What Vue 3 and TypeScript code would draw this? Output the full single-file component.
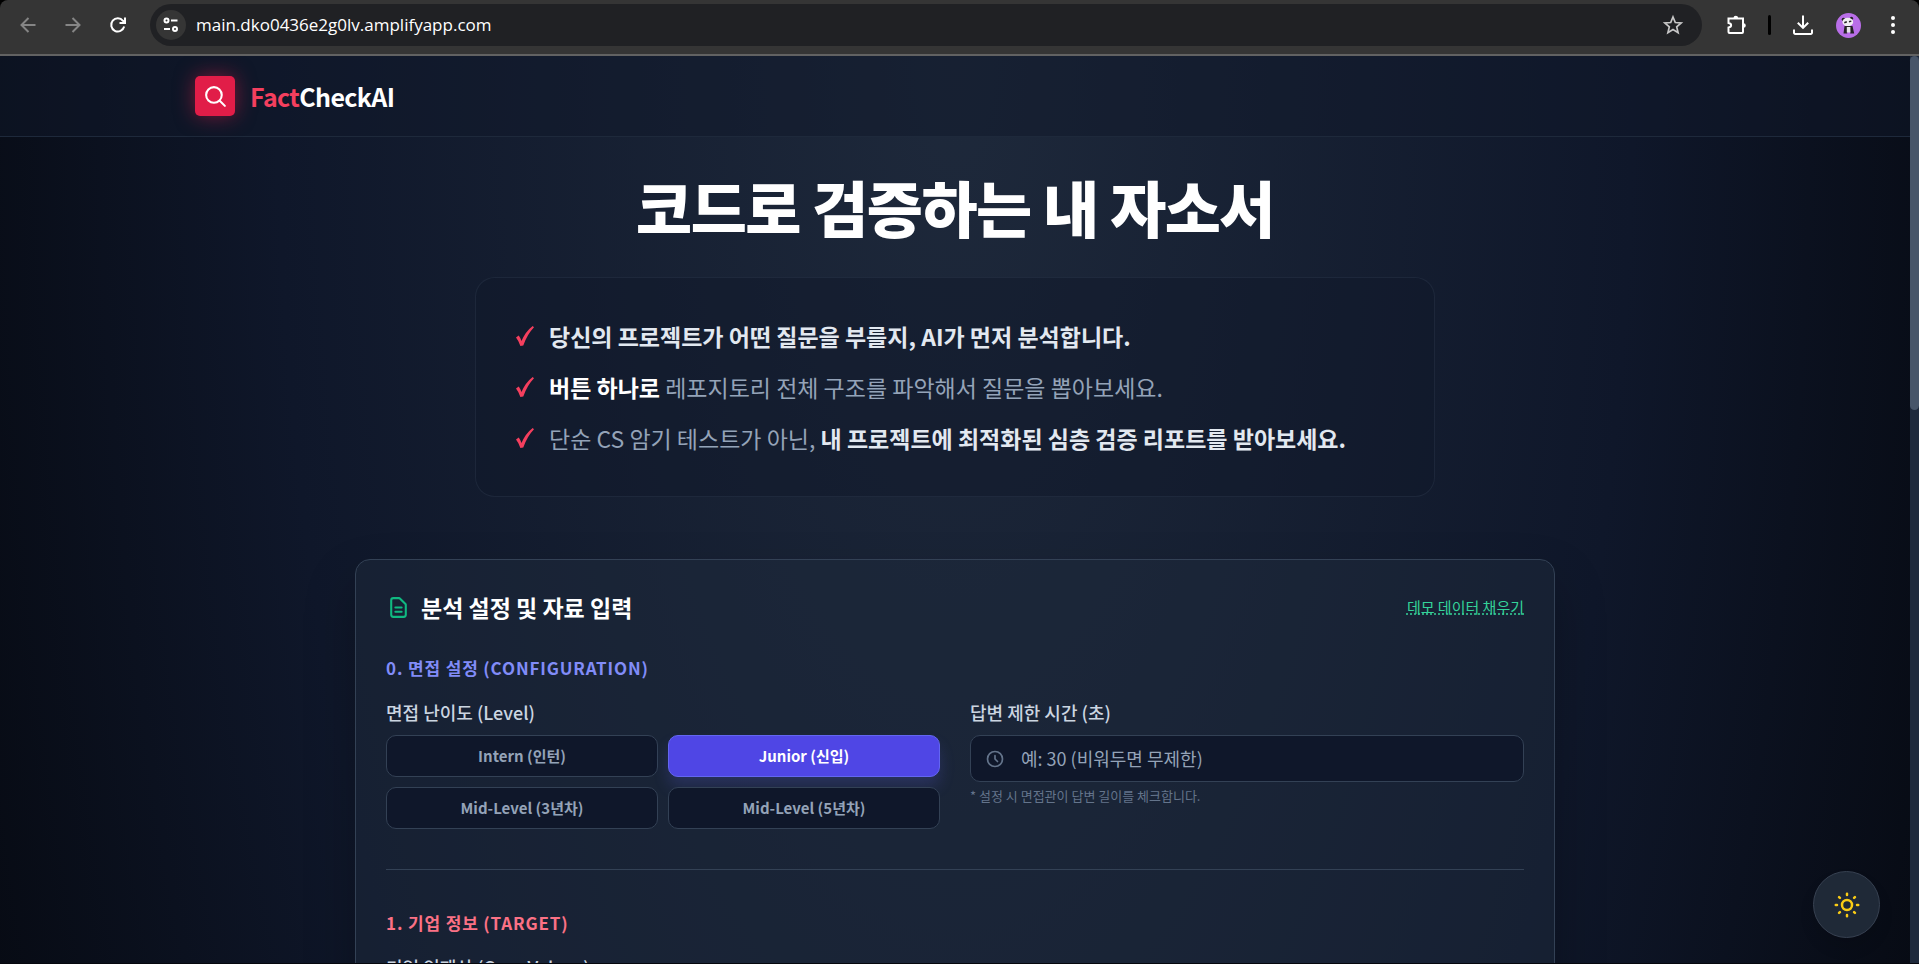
<script setup lang="ts">
import { ref } from 'vue'

interface Level {
  value: string
  label: string
}

const levels: Level[] = [
  { value: 'intern', label: 'Intern (인턴)' },
  { value: 'junior', label: 'Junior (신입)' },
  { value: 'mid3', label: 'Mid-Level (3년차)' },
  { value: 'mid5', label: 'Mid-Level (5년차)' },
]

const selected = ref<string>('junior')
const timeLimit = ref<string>('')
const coreValues = ref<string>('')
const address = ref<string>('main.dko0436e2g0lv.amplifyapp.com')
</script>

<template>
  <div class="window">
    <div class="toolbar">
      <button class="tool" type="button" aria-label="Back">
        <svg class="dim" width="20" height="20" viewBox="0 0 20 20"><path d="M17.500 10H3.500M10.500 3 3.500 10l7 7" /></svg>
      </button>
      <button class="tool" type="button" aria-label="Forward">
        <svg class="dim" width="20" height="20" viewBox="0 0 20 20"><path d="M2.500 10h14M9.500 3l7 7-7 7" /></svg>
      </button>
      <button class="tool" type="button" aria-label="Reload">
        <svg class="bold" width="20" height="20" viewBox="0 0 20 20"><path d="M16.200 11.600A6.600 6.600 0 1 1 15 5.800L16.500 7.300M17 2.500V8h-5.500" /></svg>
      </button>
      <div class="omnibox">
        <button class="site" type="button" aria-label="Site information">
          <svg width="18" height="18" viewBox="0 0 18 18"><circle cx="4.500" cy="4.500" r="2" /><path d="M9 4.500h6.500M2 13h6" /><circle cx="13" cy="13" r="2" /></svg>
        </button>
        <input v-model="address" class="address" type="text" aria-label="Address" spellcheck="false" />
        <button class="star" type="button" aria-label="Bookmark">
          <svg width="22" height="22" viewBox="0 0 22 22"><path d="M11 3l2.300 5.500 5.900.5-4.500 3.900 1.400 5.800L11 15.600l-5.100 3.100 1.400-5.800L2.800 9l5.900-.5z" /></svg>
        </button>
      </div>
      <div class="actions">
        <button class="action extensions" type="button" aria-label="Extensions">
          <svg class="bold" width="24" height="24" viewBox="0 0 24 24"><path d="M4.500 5.500h14.500v13.500a1 1 0 0 1-1 1H5.500a1 1 0 0 1-1-1v-4.500c3.500-.5 3.500-4 0-4.500z" /><path class="fill" d="M9.500 5a2.300 2.300 0 0 1 4.600 0zM19.500 10.200a2.300 2.300 0 0 1 0 4.600z" /></svg>
        </button>
        <span class="bar"></span>
        <button class="action" type="button" aria-label="Downloads">
          <svg class="bold" width="24" height="24" viewBox="0 0 24 24"><path d="M12 2.500v12M6.800 9.700l5.200 5.200 5.200-5.200M3 16.500v3.300a1.200 1.200 0 0 0 1.200 1.200h15.600a1.200 1.200 0 0 0 1.200-1.200v-3.300" /></svg>
        </button>
        <button class="action" type="button" aria-label="Profile">
          <svg class="avatar" width="25" height="25" viewBox="0 0 25 25">
            <circle cx="12.500" cy="12.500" r="12.500" fill="#b96ee8" />
            <circle cx="7.500" cy="6.500" r="1.800" fill="#242226" /><circle cx="15.500" cy="5.300" r="1.600" fill="#242226" />
            <ellipse cx="11.800" cy="9" rx="5.400" ry="4.200" fill="#f0edf2" />
            <path d="M8.300 9.800l2.500-1M13 8.800l2.300-.7" stroke="#242226" stroke-width="1.500" />
            <path d="M8.500 13h8l1.700 7.500h-4v-3h-3v3H7.500z" fill="#242226" />
            <path d="M10.800 14h3.600v5.500h-3.600z" fill="#e5e2e8" />
          </svg>
        </button>
        <button class="action" type="button" aria-label="Menu">
          <svg width="24" height="24" viewBox="0 0 24 24"><g class="fill"><circle cx="12" cy="5" r="2" /><circle cx="12" cy="12" r="2" /><circle cx="12" cy="19" r="2" /></g></svg>
        </button>
      </div>
    </div>

    <div class="viewport">
      <div class="page">
        <header class="header">
          <div class="brand">
            <span class="mark">
              <svg width="25" height="25" viewBox="0 0 24 24"><path d="M21 21l-5.197-5.197M18 10.500a7.500 7.500 0 1 1-15 0 7.500 7.500 0 0 1 15 0z" /></svg>
            </span>
            <span class="name"><span class="accent">Fact</span>CheckAI</span>
          </div>
        </header>

        <main class="main">
          <h1>코드로 검증하는 내 자소서</h1>

          <ul class="intro">
            <li><svg class="check" width="20" height="22" viewBox="0 0 20 22"><path d="M0 12.500 2.700 10.600Q4.500 13 5.500 16 9.500 6.500 16.700 1L18 2.200Q11 9.500 7.300 20.500L4.400 21Q2.700 15.800 0 12.500z" /></svg><span><strong>당신의 프로젝트가 어떤 질문을 부를지, AI가 먼저 분석합니다.</strong></span></li>
            <li><svg class="check" width="20" height="22" viewBox="0 0 20 22"><path d="M0 12.500 2.700 10.600Q4.500 13 5.500 16 9.500 6.500 16.700 1L18 2.200Q11 9.500 7.300 20.500L4.400 21Q2.700 15.800 0 12.500z" /></svg><span><strong class="white">버튼 하나로</strong> 레포지토리 전체 구조를 파악해서 질문을 뽑아보세요.</span></li>
            <li><svg class="check" width="20" height="22" viewBox="0 0 20 22"><path d="M0 12.500 2.700 10.600Q4.500 13 5.500 16 9.500 6.500 16.700 1L18 2.200Q11 9.500 7.300 20.500L4.400 21Q2.700 15.800 0 12.500z" /></svg><span>단순 CS 암기 테스트가 아닌, <strong>내 프로젝트에 최적화된 심층 검증 리포트를 받아보세요.</strong></span></li>
          </ul>

          <form class="card" @submit.prevent>
            <div class="card-head">
              <h2>
                <svg width="25" height="25" viewBox="0 0 24 24"><path d="M9 12h6m-6 4h6m2 5H7a2 2 0 0 1-2-2V5a2 2 0 0 1 2-2h5.586a1 1 0 0 1 .707.293l5.414 5.414a1 1 0 0 1 .293.707V19a2 2 0 0 1-2 2z" /></svg>
                분석 설정 및 자료 입력
              </h2>
              <button class="demo" type="button">데모 데이터 채우기</button>
            </div>

            <section class="config">
              <h3>0. 면접 설정 (CONFIGURATION)</h3>
              <div class="columns">
                <div class="field" role="group" aria-labelledby="level-label">
                  <span id="level-label" class="label">면접 난이도 (Level)</span>
                  <div class="levels">
                    <button
                      v-for="level in levels"
                      :key="level.value"
                      type="button"
                      class="level"
                      :class="{ active: selected === level.value }"
                      :aria-pressed="selected === level.value"
                      @click="selected = level.value"
                    >{{ level.label }}</button>
                  </div>
                </div>
                <div class="field">
                  <label class="label" for="time-limit">답변 제한 시간 (초)</label>
                  <div class="time">
                    <svg width="20" height="20" viewBox="0 0 24 24"><path d="M12 8v4l3 3m6-3a9 9 0 1 1-18 0 9 9 0 0 1 18 0z" /></svg>
                    <input id="time-limit" v-model="timeLimit" type="text" inputmode="numeric" placeholder="예: 30 (비워두면 무제한)" />
                  </div>
                  <p class="hint">* 설정 시 면접관이 답변 길이를 체크합니다.</p>
                </div>
              </div>
            </section>

            <section class="target">
              <h3>1. 기업 정보 (TARGET)</h3>
              <div class="field">
                <label class="label" for="core-values">기업 인재상 (Core Values)</label>
                <textarea id="core-values" v-model="coreValues" rows="4"></textarea>
              </div>
            </section>
          </form>
        </main>
      </div>

      <div class="scrollbar"><div class="thumb"></div></div>

      <button class="theme" type="button" aria-label="Toggle theme">
        <svg width="30" height="30" viewBox="0 0 24 24"><path d="M12 3v1m0 16v1m9-9h-1M4 12H3m15.364 6.364l-.707-.707M6.343 6.343l-.707-.707m12.728 0l-.707.707M6.343 17.657l-.707.707M16 12a4 4 0 1 1-8 0 4 4 0 0 1 8 0z" /></svg>
      </button>
    </div>
  </div>
</template>

<style>
html,
body {
  background: #000;
}
body {
  margin: 0;
}
</style>

<style scoped>
.window,
.window * {
  box-sizing: border-box;
}
.window {
  height: 100vh;
  display: flex;
  flex-direction: column;
  overflow: hidden;
  border-bottom: 1px solid #05070d;
  font-family: "Noto Sans CJK KR", "Noto Sans", sans-serif;
  color: #fff;
}
button {
  margin: 0;
  padding: 0;
  border: 0;
  background: none;
  color: inherit;
  font-family: inherit;
  cursor: pointer;
}
svg {
  display: block;
  flex: none;
  fill: none;
  stroke: currentColor;
  stroke-width: 2;
}
.page svg,
.theme svg {
  stroke-linecap: round;
  stroke-linejoin: round;
}

/* browser toolbar */
.toolbar {
  height: 56px;
  flex: none;
  display: flex;
  align-items: center;
  padding: 0 14px 4px 18px;
  background: #353535;
  border-bottom: 2px solid #626262;
  border-radius: 8px 8px 0 0;
}
.tool {
  width: 20px;
  height: 20px;
  margin-right: 25px;
}
.tool .dim {
  color: #858585;
}
.bold {
  stroke-width: 2;
}
.omnibox {
  flex: 1;
  height: 42px;
  margin-left: -3px;
  display: flex;
  align-items: center;
  padding: 0 18px 0 6px;
  border-radius: 21px;
  background: #202124;
}
.site {
  width: 30px;
  height: 30px;
  display: flex;
  align-items: center;
  justify-content: center;
  border-radius: 50%;
  background: #353535;
}
.address {
  flex: 1;
  min-width: 0;
  margin-left: 10px;
  padding: 0;
  border: 0;
  outline: 0;
  background: none;
  color: #fff;
  font: 17px/24px "Open Sans", "Noto Sans", sans-serif;
}
.star {
  color: #c7c7c7;
}
.star svg {
  stroke-width: 1.7;
}
.actions {
  display: flex;
  align-items: center;
  margin-left: 22px;
}
.action {
  width: 24px;
  height: 25px;
  display: flex;
  align-items: center;
  justify-content: center;
  margin-right: 21px;
}
.action:last-child {
  margin-right: 0;
}
.extensions {
  margin-right: 20px;
}
.bar {
  width: 3px;
  height: 20px;
  margin-right: 20px;
  border-radius: 2px;
  background: #000;
}
.fill {
  fill: currentColor;
  stroke: none;
}
.avatar {
  stroke: none;
}

/* page */
.viewport {
  position: relative;
  flex: 1;
  min-height: 0;
  display: flex;
}
.page {
  flex: 1;
  min-width: 0;
  overflow: hidden;
  background: radial-gradient(71% 360% at top, #1e293b, #0f172a 50%, #000);
}
.header {
  border-bottom: 1px solid #1e293b;
  background: rgba(15, 23, 42, 0.5);
}
.brand {
  max-width: 1600px;
  height: 80px;
  margin: 0 auto;
  padding: 0 40px;
  display: flex;
  align-items: center;
  gap: 15px;
}
.mark {
  width: 40px;
  height: 40px;
  display: flex;
  align-items: center;
  justify-content: center;
  border-radius: 5px;
  background: #e11d48;
  box-shadow: 0 0 20px rgba(225, 29, 72, 0.5);
}
.name {
  font-size: 25px;
  line-height: 35px;
  font-weight: 700;
  letter-spacing: -0.025em;
}
.accent {
  color: #f43f5e;
}
.main {
  padding: 32px 20px 0;
}
h1,
h2,
h3,
p {
  margin: 0;
}
h1 {
  margin-bottom: 33px;
  font-size: 61px;
  line-height: 75px;
  font-weight: 900;
  letter-spacing: -0.025em;
  text-align: center;
}
.intro {
  max-width: 960px;
  margin: 0 auto 62px;
  padding: 40px;
  display: flex;
  flex-direction: column;
  gap: 15px;
  list-style: none;
  border: 1px solid rgba(51, 65, 85, 0.35);
  border-radius: 20px;
  background: rgba(15, 23, 42, 0.5);
  color: #94a3b8;
  font-size: 23px;
  line-height: 36px;
}
.intro li {
  display: flex;
  align-items: center;
  gap: 13px;
}
.intro strong {
  color: #e2e8f0;
  font-weight: 700;
}
.intro .white {
  color: #fff;
}
.check {
  color: #f43f5e;
}
.check path {
  fill: currentColor;
  stroke: none;
}
.card {
  max-width: 1200px;
  margin: 0 auto;
  padding: 30px;
  border: 1px solid #334155;
  border-radius: 15px;
  background: rgba(30, 41, 59, 0.5);
  box-shadow: 0 25px 50px rgba(0, 0, 0, 0.25);
}
.card-head {
  display: flex;
  align-items: center;
  justify-content: space-between;
  margin-bottom: 31px;
}
h2 {
  display: flex;
  align-items: center;
  gap: 10px;
  font-size: 23px;
  line-height: 34px;
  font-weight: 700;
}
h2 svg {
  color: #10b981;
}
.demo {
  color: #34d399;
  font-size: 15px;
  line-height: 20px;
  text-decoration: underline dotted;
}
h3 {
  margin-bottom: 20px;
  font-size: 17px;
  line-height: 25px;
  font-weight: 700;
  letter-spacing: 0.05em;
}
.config {
  padding-bottom: 40px;
  border-bottom: 1px solid #334155;
}
.config h3 {
  color: #818cf8;
}
.target {
  padding-top: 40px;
}
.target h3 {
  color: #fb7185;
}
.columns {
  display: grid;
  grid-template-columns: 1fr 1fr;
  gap: 30px;
}
.label {
  display: block;
  margin-bottom: 10px;
  color: #cbd5e1;
  font-size: 18px;
  line-height: 25px;
  font-weight: 500;
}
.levels {
  display: grid;
  grid-template-columns: 1fr 1fr;
  gap: 10px;
}
.level {
  height: 42px;
  border: 1px solid #334155;
  border-radius: 10px;
  background: #0f172a;
  color: #94a3b8;
  font-size: 15px;
  line-height: 20px;
  font-weight: 700;
}
.level.active {
  border-color: #6366f1;
  background: #4f46e5;
  color: #fff;
  box-shadow: 0 10px 15px rgba(99, 102, 241, 0.2);
}
.time {
  height: 47px;
  display: flex;
  align-items: center;
  gap: 16px;
  padding: 0 14px;
  border: 1px solid #334155;
  border-radius: 10px;
  background: #0f172a;
}
.time svg {
  color: #64748b;
}
.time input {
  flex: 1;
  min-width: 0;
  padding: 0;
  border: 0;
  outline: 0;
  background: none;
  color: #fff;
  font: 18px/25px "Noto Sans CJK KR", sans-serif;
}
.time input::placeholder {
  color: #94a3b8;
  opacity: 1;
}
.hint {
  margin-top: 5px;
  color: #64748b;
  font-size: 13px;
  line-height: 18px;
}
textarea {
  display: block;
  width: 100%;
  padding: 15px;
  border: 1px solid #334155;
  border-radius: 10px;
  background: #0f172a;
  color: #fff;
  font: inherit;
  resize: none;
}

/* overlays */
.scrollbar {
  width: 9px;
  flex: none;
  background: #1e293b;
}
.thumb {
  height: 39%;
  border-radius: 5px;
  background: #475569;
}
.theme {
  position: absolute;
  right: 39px;
  bottom: 25px;
  width: 67px;
  height: 67px;
  display: flex;
  align-items: center;
  justify-content: center;
  border: 1px solid #374151;
  border-radius: 50%;
  background: #1f2937;
  color: #facc15;
  box-shadow: 0 10px 15px rgba(0, 0, 0, 0.1);
}
</style>
